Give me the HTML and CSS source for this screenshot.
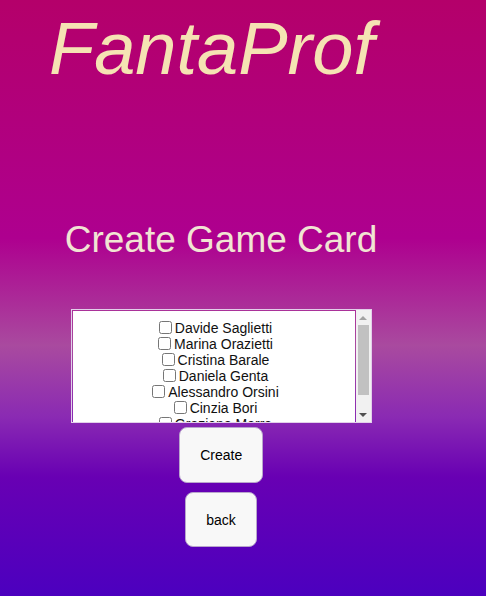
FILE: index.html
```html
<!DOCTYPE html>
<html>
<head>
<meta charset="utf-8">
<link rel="stylesheet" href="styles.css">
</head>
<body>
<div class="page">
  <h1 class="title">FantaProf</h1>
  <h2 class="subtitle">Create Game Card</h2>
  <div class="listbox">
    <div class="viewport">
      <div class="list">
        <div class="item"><input type="checkbox">Davide Saglietti</div>
        <div class="item"><input type="checkbox">Marina Orazietti</div>
        <div class="item"><input type="checkbox">Cristina Barale</div>
        <div class="item"><input type="checkbox">Daniela Genta</div>
        <div class="item"><input type="checkbox">Alessandro Orsini</div>
        <div class="item"><input type="checkbox">Cinzia Bori</div>
        <div class="item"><input type="checkbox">Graziana Marra</div>
      </div>
    </div>
    <div class="scrollbar">
      <div class="sb-btn"><span class="arrow-up"></span></div>
      <div class="sb-track"><div class="sb-thumb"></div></div>
      <div class="sb-btn"><span class="arrow-down"></span></div>
    </div>
  </div>
  <div class="actions">
    <button class="btn btn-create">Create</button>
    <button class="btn btn-back">back</button>
  </div>
</div>
</body>
</html>
```
FILE: styles.css
```css
html, body {
  margin: 0;
  padding: 0;
}
body {
  width: 486px;
  height: 596px;
  overflow: hidden;
  font-family: "Liberation Sans", Arial, sans-serif;
  background: linear-gradient(180deg,
    #b4006a 0%,
    #ae008f 40%,
    #a94a9f 58%,
    #8a2ab3 70%,
    #6800b3 80%,
    #4c00bf 100%);
}
.page {
  width: 442px;
  display: flex;
  flex-direction: column;
}
.title {
  margin: 11px 0 0 0;
  padding-left: 49px;
  font-size: 74px;
  line-height: 75px;
  font-style: italic;
  font-weight: normal;
  color: #f5e3b3;
}
.subtitle {
  margin: 135px 0 0 0;
  text-align: center;
  font-size: 37px;
  line-height: 37px;
  font-weight: normal;
  color: #f1e4d3;
}
.listbox {
  box-sizing: border-box;
  width: 301px;
  height: 114px;
  margin: 51px auto 0 auto;
  border: 1px solid #e2d0ea;
  display: flex;
}
.viewport {
  flex: 1;
  padding: 1px;
  overflow: hidden;
}
.list {
  background: #ffffff;
  padding: 9px 0 8px 0;
  min-height: 100%;
}
.item {
  text-align: center;
  font-size: 14px;
  line-height: 16px;
  height: 16px;
  color: #111;
  white-space: nowrap;
}
.item input {
  margin: 0 3px 0 4px;
  width: 13px;
  height: 13px;
  vertical-align: -1px;
}
.scrollbar {
  width: 15px;
  background: #f1f1f1;
  display: flex;
  flex-direction: column;
}
.sb-btn {
  height: 15px;
  display: flex;
  align-items: center;
  justify-content: center;
}
.arrow-up {
  width: 0;
  height: 0;
  border-left: 4px solid transparent;
  border-right: 4px solid transparent;
  border-bottom: 4px solid #a3a3a3;
}
.arrow-down {
  width: 0;
  height: 0;
  border-left: 4px solid transparent;
  border-right: 4px solid transparent;
  border-top: 4px solid #505050;
}
.sb-track {
  flex: 1;
  display: flex;
  flex-direction: column;
  align-items: center;
}
.sb-thumb {
  width: 11px;
  height: 70px;
  background: #c1c1c1;
}
.actions {
  display: flex;
  flex-direction: column;
  align-items: center;
}
.btn {
  font-family: "Liberation Sans", Arial, sans-serif;
  font-size: 14px;
  line-height: 16px;
  color: #000;
  background: #f8f8f8;
  border: 1px solid #b9a6cc;
  border-radius: 8px;
  padding: 19px 20px;
}
.btn-create {
  margin-top: 4px;
  padding-left: 20.5px;
}
.btn-back {
  margin-top: 9px;
  padding-bottom: 18px;
}
```
